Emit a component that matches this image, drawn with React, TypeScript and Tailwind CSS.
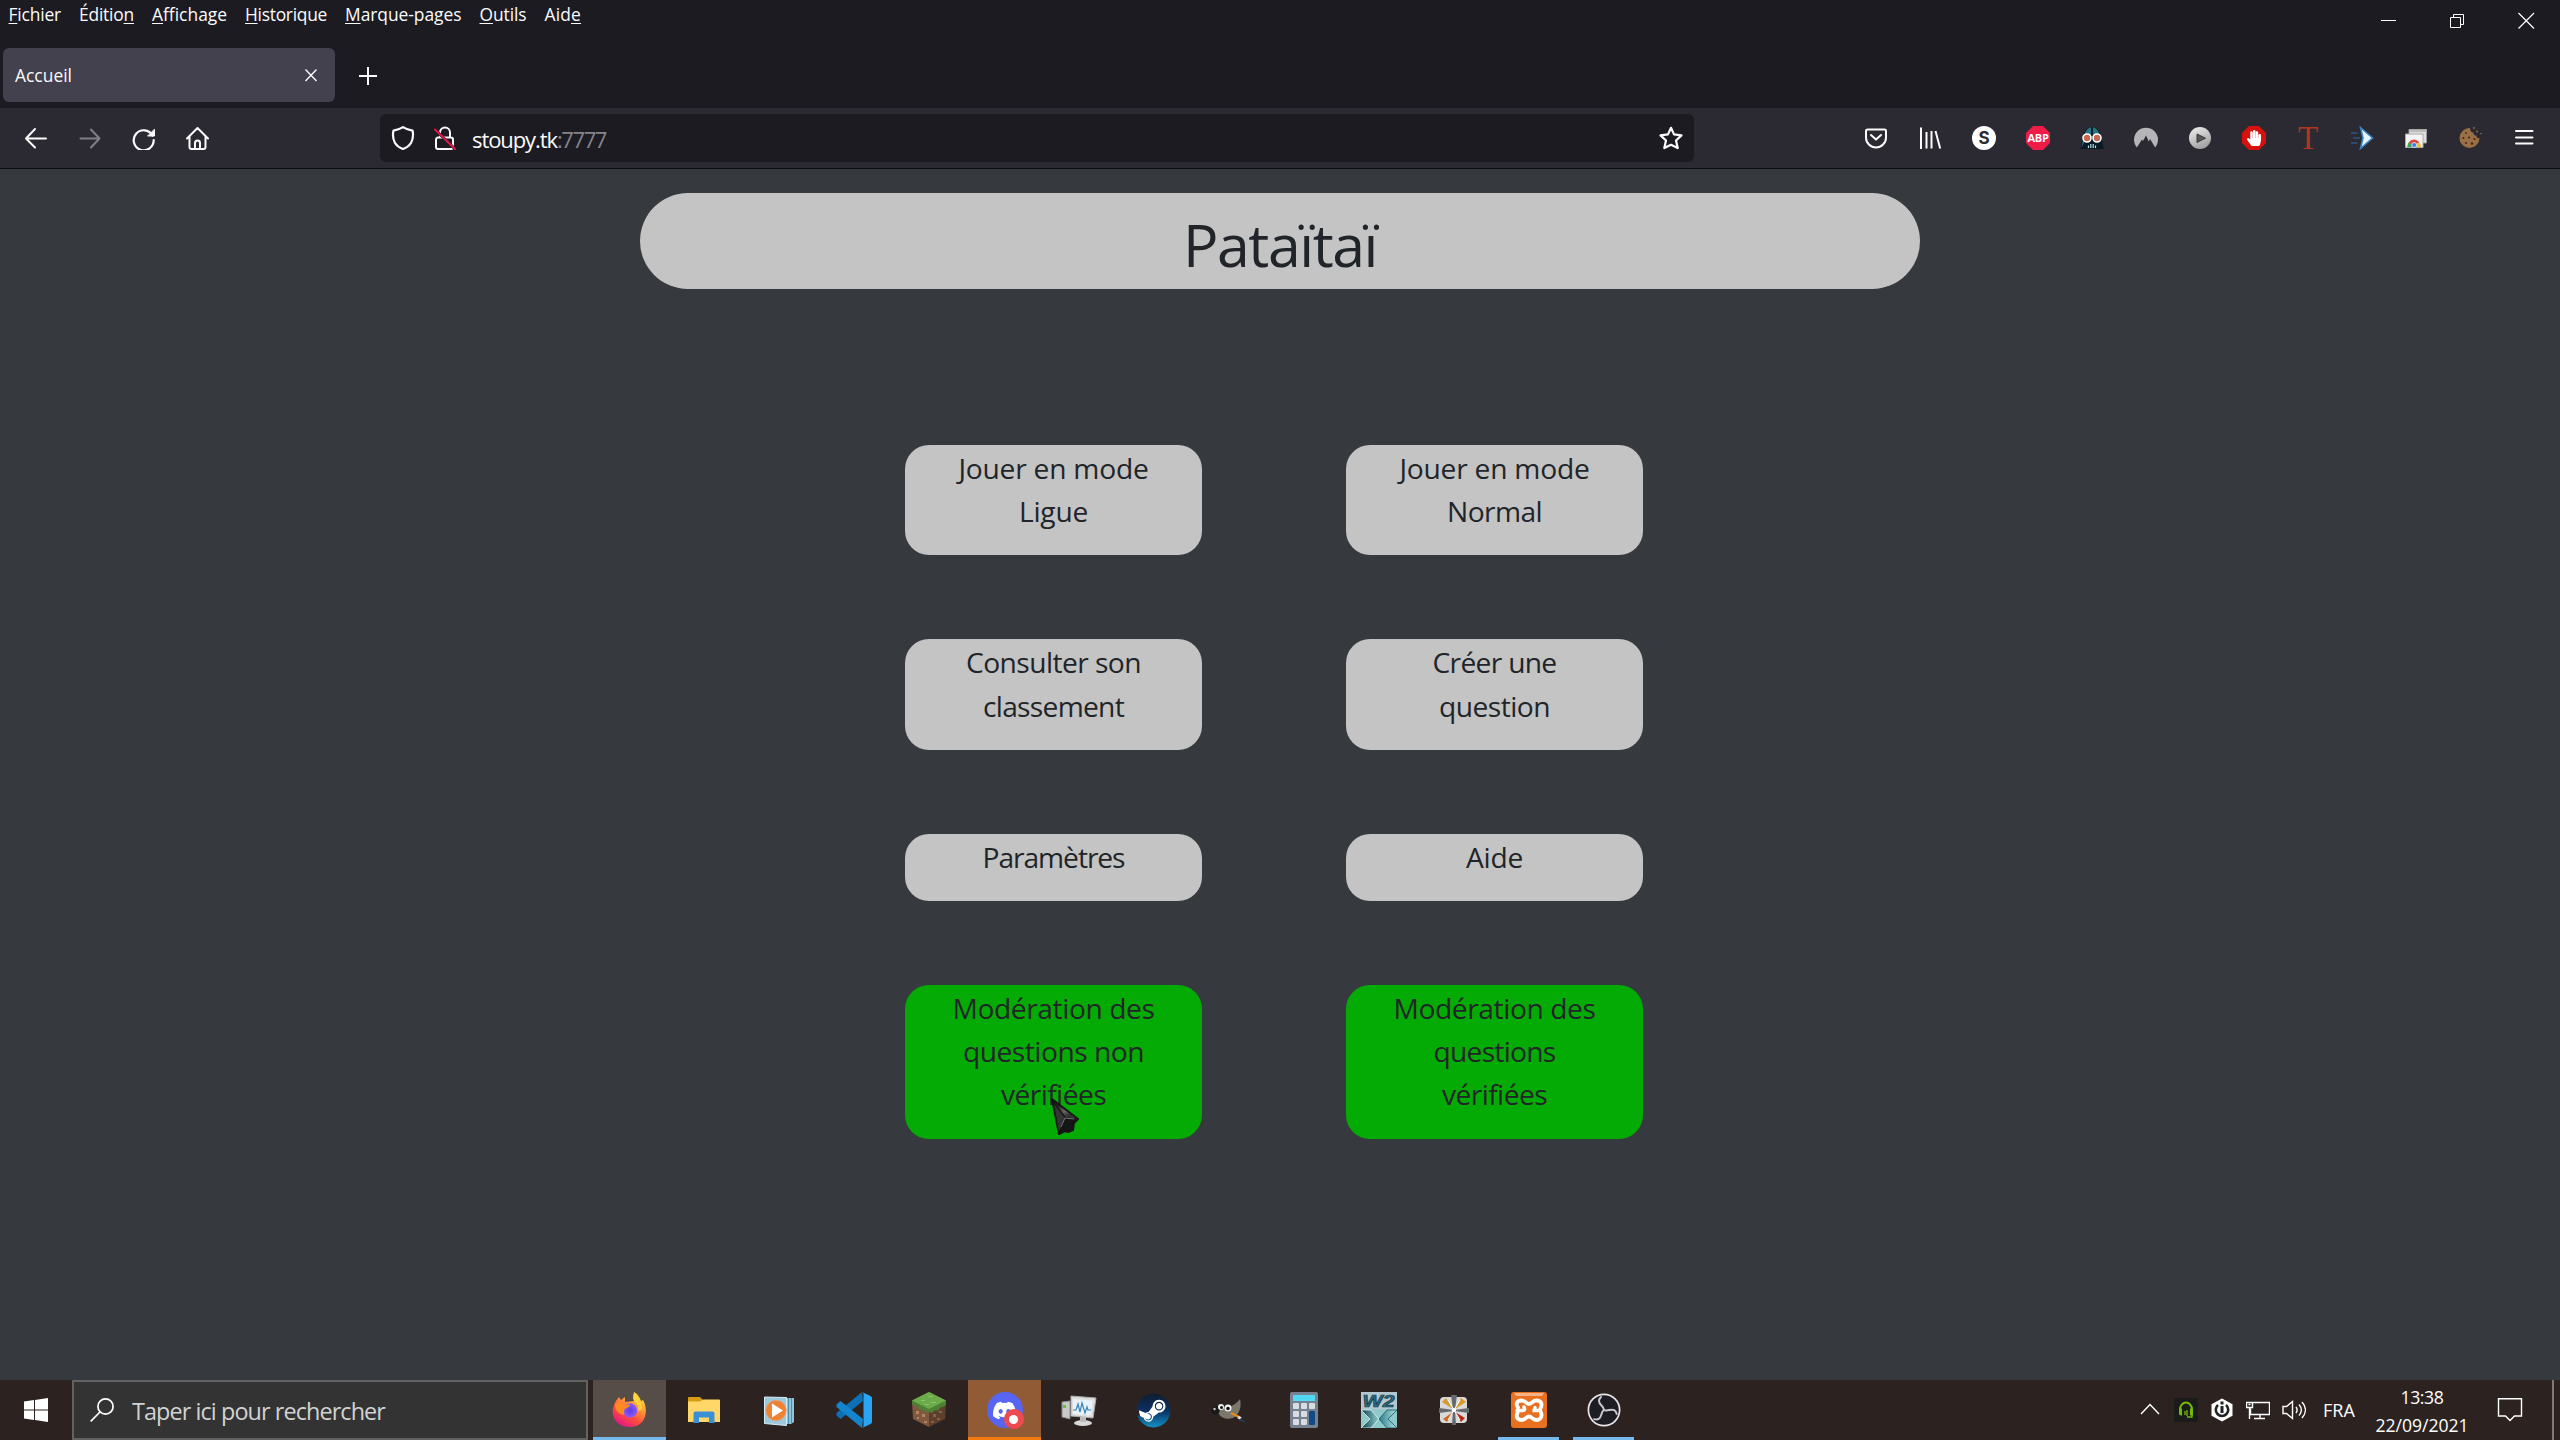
import { useLayoutEffect, useRef, type ReactNode } from 'react';
import { FaDiscord, FaSteam, FaHandPaper } from 'react-icons/fa';

/* Text whose tracking is adjusted so the run fills a given width. */
function Fit({ w, className = '', children }: { w: number; className?: string; children: ReactNode }) {
  const ref = useRef<HTMLSpanElement>(null);
  useLayoutEffect(() => {
    const el = ref.current;
    if (!el) return;
    el.style.letterSpacing = '0px';
    const n = (el.textContent || '').length;
    el.style.letterSpacing = `${(w - el.getBoundingClientRect().width) / n}px`;
  }, [w]);
  return (
    <span ref={ref} className={`inline-block whitespace-nowrap ${className}`}>
      {children}
    </span>
  );
}

const U = ({ children }: { children: ReactNode }) => (
  <span className="underline decoration-1 underline-offset-[2px] [text-decoration-skip-ink:none]">{children}</span>
);

function MenuBar() {
  return (
    <div className="flex h-[30px] gap-[18px] pl-[8.5px] text-[17.4px] leading-[29px] text-[#fbfbfe]">
      <Fit w={52.5}><U>F</U>ichier</Fit>
      <Fit w={55}>Éditio<U>n</U></Fit>
      <Fit w={75}><U>A</U>ffichage</Fit>
      <Fit w={82}><U>H</U>istorique</Fit>
      <Fit w={116.5}><U>M</U>arque-pages</Fit>
      <Fit w={47}><U>O</U>utils</Fit>
      <Fit w={36.5}>Aid<U>e</U></Fit>
    </div>
  );
}

function WindowButtons() {
  return (
    <div className="flex h-[42px] text-white">
      <svg width="69" height="42" fill="none" stroke="currentColor"><path d="M27 20.5h15" /></svg>
      <svg width="68" height="42" fill="none" stroke="currentColor"><path d="M27.5 17.5h10v10h-10zM30.500 17.500v-3h10v10h-3" /></svg>
      <svg width="69" height="42" fill="none" stroke="currentColor" strokeWidth="1.200"><path d="M27.500 13l15.500 15.500M43 13L27.500 28.500" /></svg>
    </div>
  );
}

const white = { fill: 'none', stroke: '#fbfbfe', strokeWidth: 2, strokeLinecap: 'round', strokeLinejoin: 'round' } as const;

function Extensions() {
  const icons: ReactNode[] = [
    <svg width="24" height="24" viewBox="0 0 24 24" {...white}><path d="M3.500 3.500h17a1.500 1.500 0 0 1 1.500 1.500v6.500a10 10 0 0 1-20 0V5a1.500 1.500 0 0 1 1.500-1.500zM7 9l5 4.600L17 9" /></svg>,
    <svg width="24" height="24" viewBox="0 0 24 24" {...white} strokeLinecap="butt"><path d="M3 1.500v21.500M8.500 6v16.500M13.500 5v17.500M17.500 5l4.700 17.500" /></svg>,
    <svg width="24" height="24" viewBox="0 0 24 24"><circle cx="12" cy="12" r="12" fill="#fff" /><text x="12" y="18" textAnchor="middle" fontSize="17" fontWeight="700" fontFamily="Inter, sans-serif" fill="#2b2a33">S</text></svg>,
    <span className="relative flex size-6 items-center justify-center"><svg className="absolute inset-0" width="24" height="24" viewBox="0 0 24 24"><path d="M7 0h10l7 7v10l-7 7H7l-7-7V7z" fill="#ee1c46" /></svg><span className="relative text-[11px] leading-6 font-bold tracking-[-0.3px] text-white">ABP</span></span>,
    <svg width="24" height="24" viewBox="0 0 24 24"><path d="M0 23C2 18 2 9 5 5c3-5 10-6 14 0 3 4 3 13 5 18z" fill="#0b1a24" /><path d="M5 7C8-1 16-1 19 7l1 4H4zM1 22C3 17 3 11 5 8l-1 9z" fill="#28747f" /><path d="M11 1h2v9h-2z" fill="#123" /><circle cx="7" cy="12" r="4" fill="#c86a50" stroke="#fff" strokeWidth="1.600" /><circle cx="17" cy="12" r="4" fill="#c86a50" stroke="#fff" strokeWidth="1.600" /><path d="M8.500 19.500V22M10.800 18v4M13.200 18v4M15.500 19.500V22" stroke="#aee0e8" strokeWidth="1.200" /></svg>,
    <svg width="24" height="24" viewBox="0 0 24 24"><path d="M2.800 21.500A12 12 0 1 1 21.200 21.500L16 13l-1.200 2.600L12 9.500l-3 5.500-1-1.500z" fill="#b5b5b9" /></svg>,
    <svg width="24" height="24" viewBox="0 0 24 24"><defs><linearGradient id="pl" x2="0.500" y2="1"><stop stopColor="#f2f2f2" /><stop offset="1" stopColor="#a2a2a2" /></linearGradient></defs><circle cx="12" cy="12" r="11" fill="url(#pl)" /><path d="M9 8l8.500 4.200L9 16.500z" fill="#555" stroke="#3a3a3a" /></svg>,
    <span className="relative flex size-6 items-center justify-center"><svg className="absolute inset-0" width="24" height="24" viewBox="0 0 24 24"><path d="M7 0h10l7 7v10l-7 7H7l-7-7V7z" fill="#d8100e" /></svg><FaHandPaper className="relative" size={16} color="#fff" /></span>,
    <span className="font-['Liberation_Serif',serif] text-[33px] leading-[40px] text-[#b03422]">T</span>,
    <svg width="24" height="24" viewBox="0 0 24 24"><path d="M10.500 1.500L22.500 12l-12 10.500 2.500-10.500z" fill="#e6f4ff" stroke="#3c83c4" strokeWidth="1.600" /><path d="M1 7h6.500M3 12h7M1 17h6.500" stroke="#2a5785" strokeWidth="1.600" /></svg>,
    <svg width="24" height="24" viewBox="0 0 24 24"><path d="M5 3.500h17.500v13.500H5z" fill="#ddd" stroke="#999" /><path d="M5 3.500h17.500V6H5z" fill="#bbb" /><path d="M1.500 8h17.500v13.500H1.500z" fill="#f3f3f3" stroke="#aaa" /><path d="M3.500 21a6.500 7.500 0 0 1 13 0z" fill="#e0453a" /><path d="M3.500 21c0-2 .5-3.500 1.500-5L9 21z" fill="#3aa757" /><path d="M12 21l1-4h3c.5 1.500.5 2.500.5 4z" fill="#fbc11a" /><circle cx="10.200" cy="19" r="2.500" fill="#3f7ff0" stroke="#fff" strokeWidth="0.700" /></svg>,
    <svg width="24" height="24" viewBox="0 0 24 24"><path d="M12 2a10 10 0 1 0 9.500 10c-2 .5-3-.5-3-2.200-2 0-3.500-1.500-3-3.300C13 6.500 12 4.500 12 2z" fill="#9b6f45" /><g fill="#3c2718"><circle cx="8" cy="7" r="0.900" /><circle cx="5.500" cy="12" r="1" /><circle cx="11" cy="11.500" r="1.100" /><circle cx="8" cy="17" r="1" /><circle cx="14" cy="17.500" r="1.200" /><circle cx="16.500" cy="13" r="1" /></g><g fill="#9b6f45"><circle cx="16" cy="2" r="0.900" /><circle cx="19" cy="5.500" r="1" /><circle cx="23" cy="7.500" r="0.800" /></g></svg>,
    <svg width="24" height="24" viewBox="0 0 24 24" {...white}><path d="M4 5h16.500M4 11.500h16.500M4 17.500h16.500" /></svg>,
  ];
  return (
    <div className="flex pr-[9px]">
      {icons.map((icon, i) => (
        <div key={i} className="flex w-[54px] items-center justify-center">{icon}</div>
      ))}
    </div>
  );
}

function Toolbar() {
  return (
    <div className="flex h-[61px] items-stretch border-b border-[#0c0c0e] bg-[#2b2a33]">
      <div className="flex w-[380px] items-center gap-[30px] pl-6">
        <svg width="24" height="24" viewBox="0 0 24 24" {...white}><path d="M2 12.500h20M11 3L2 12.500l9 9" /></svg>
        <svg width="24" height="24" viewBox="0 0 24 24" {...white} stroke="#7f7e85"><path d="M2.500 12.500h19M13 3.500l8.500 9-8.500 9" /></svg>
        <svg width="24" height="24" viewBox="0 0 24 24" {...white} strokeWidth="2.200"><path d="M20.500 9.500A10 10 0 1 0 21.700 14" /><path d="M22.500 3.500v6.500h-6.500z" fill="#fbfbfe" strokeWidth="1" /></svg>
        <svg width="24" height="24" viewBox="0 0 24 24" {...white}><path d="M1 12.500L11.500 2 22 12.500M3.500 10.500V21a2 2 0 0 0 2 2h12a2 2 0 0 0 2-2V10.500M9 22.500V17a2.500 2.500 0 0 1 5 0v5.500" /></svg>
      </div>
      <div className="my-1.5 flex w-[1314px] items-center rounded-md bg-[#1c1b22] pr-[11px] pl-[11px]">
        <svg width="24" height="24" viewBox="0 0 24 24" {...white} strokeWidth="2.200"><path d="M12 1.200C9 3.200 5.500 4.200 2.500 4.600 1.500 9 1.800 13 4 17c2 3.200 5 5 8 6 3-1 6-2.800 8-6 2.200-4 2.500-8 1.500-12.400C18.500 4.200 15 3.200 12 1.200z" /></svg>
        <svg className="ml-[18px]" width="24" height="24" viewBox="0 0 24 24" {...white}><path d="M7 11.500V6.500a5 5 0 0 1 10 0v5M5.500 11.500h12.500a2 2 0 0 1 2 2v7.500a2 2 0 0 1-2 2H5a2 2 0 0 1-2-2v-7.500a2 2 0 0 1 2-2z" /><path d="M2 3.500l20 19.500" stroke="#1c1b22" strokeWidth="3" /><path d="M2 3.500l20 19.500" stroke="#e2184a" strokeWidth="2" /></svg>
        <Fit w={85} className="ml-[15px] pt-0.5 text-[22px] leading-[44px] text-[#fbfbfe]">stoupy.tk</Fit>
        <Fit w={49} className="pt-0.5 text-[22px] leading-[44px] text-[#85848b]">:7777</Fit>
        <svg className="ml-auto" width="24" height="24" viewBox="0 0 24 24" {...white} strokeWidth="2.200"><path d="M12 1.800l3 6.600 7.500 1-5.500 5.100 1.700 7.600L12 18.800l-6.700 3.300L7 14.500 1.500 9.400l7.500-1z" /></svg>
      </div>
      <div className="ml-auto flex"><Extensions /></div>
    </div>
  );
}

function Browser() {
  return (
    <header className="bg-[#1c1b22]">
      <div className="flex h-12 justify-between">
        <MenuBar />
        <WindowButtons />
      </div>
      <div className="flex h-[60px] pl-[3px]">
        <div className="flex h-[54px] w-[332px] items-center justify-between rounded-md bg-[#42414d] pr-[18px] pl-3 text-[#fbfbfe]">
          <Fit w={57} className="text-[17.4px] leading-[54px]">Accueil</Fit>
          <svg width="12" height="54" fill="none" stroke="currentColor" strokeWidth="1.400"><path d="M0.500 21.500l11 11.500M11.500 21.500l-11 11.500" /></svg>
        </div>
        <svg className="ml-[23px]" width="20" height="54" fill="none" stroke="#fbfbfe" strokeWidth="2"><path d="M1 28h18M10 19v18" /></svg>
      </div>
      <Toolbar />
    </header>
  );
}

type Line = [string, number];
const cards: { lines: Line[]; green?: boolean }[] = [
  { lines: [['Jouer en mode', 190], ['Ligue', 69]] },
  { lines: [['Jouer en mode', 190], ['Normal', 95]] },
  { lines: [['Consulter son', 175], ['classement', 141]] },
  { lines: [['Créer une', 124], ['question', 111]] },
  { lines: [['Paramètres', 142]] },
  { lines: [['Aide', 57]] },
  { lines: [['Modération des', 202], ['questions non', 181], ['vérifiées', 105]], green: true },
  { lines: [['Modération des', 202], ['questions', 122], ['vérifiées', 105]], green: true },
];

function Cursor() {
  return (
    <svg className="absolute top-[112px] left-[144px]" width="36" height="44" viewBox="0 0 36 44">
      <defs><linearGradient id="cu" x2="1" y2="1"><stop offset="0.200" stopColor="#222" /><stop offset="0.500" stopColor="#666" /><stop offset="0.700" stopColor="#333" /></linearGradient></defs>
      <path d="M3 2l26 20-4 4-1 7-5 2-3-1-6 3z" fill="#151515" stroke="#151515" strokeWidth="2" strokeLinejoin="round" />
      <path d="M5 5l23 17-11-2z" fill="url(#cu)" />
      <path d="M16 21L10 34 5 7z" fill="#343434" />
      <path d="M16 21l9 1M16 21l-4 9" stroke="#888" strokeWidth="0.800" />
    </svg>
  );
}

function Page() {
  return (
    <main className="flex flex-1 flex-col items-center bg-[#36393e] pt-6 text-[#212529]">
      <h1 className="flex h-24 w-[1280px] justify-center rounded-[48px] bg-[#c4c4c4]">
        <Fit w={194} className="text-[59px] leading-[102px]">Pataïtaï</Fit>
      </h1>
      <div className="mt-[156px] mr-3 grid grid-cols-[297px_297px] gap-x-36 gap-y-[84px]">
        {cards.map((card, i) => (
          <div key={i} className={`relative flex flex-col items-center rounded-[24px] pt-0.5 pb-[22px] ${card.green ? 'bg-[#04ab04]' : 'bg-[#c4c4c4]'}`}>
            {card.lines.map(([text, w]) => (
              <Fit key={text} w={w} className="text-[28.2px] leading-[43.2px]">{text}</Fit>
            ))}
            {i === 6 && <Cursor />}
          </div>
        ))}
      </div>
    </main>
  );
}

const apps: { icon: ReactNode; tile?: string; bar?: string }[] = [
  {
    tile: 'bg-[#564c48]', bar: 'w-[73px] bg-[#76b9ed]',
    icon: (
      <svg width="36" height="36" viewBox="0 0 36 36">
        <defs>
          <linearGradient id="ff" x1="0.900" y1="0" x2="0.300" y2="1"><stop stopColor="#fff44f" /><stop offset="0.350" stopColor="#ffa436" /><stop offset="0.700" stopColor="#ff4a3f" /><stop offset="1" stopColor="#e31587" /></linearGradient>
          <radialGradient id="fp"><stop stopColor="#5b3de0" /><stop offset="1" stopColor="#9059ff" /></radialGradient>
        </defs>
        <path d="M4 9l3-4 2 3 4-3v5l9-1-1-3 1-6c4 2 6 6 7 9l2-1c6 10 3 27-13 27C1 35-3 20 4 9z" fill="url(#ff)" />
        <circle cx="18" cy="18.500" r="7.200" fill="url(#fp)" />
        <path d="M3 13c2-3 5-3 8-1 2 1 4 0 7 1-1 3-4 3-5 4-2 2 0 4-1 6-6-1-9-5-9-10z" fill="#ff8a22" />
        <path d="M23 10c3 2 4 6 3 9l4-1c0-7-3-12-8-17-1 4-1 6 1 9z" fill="#ffd93b" opacity="0.800" />
      </svg>
    ),
  },
  { icon: <svg width="36" height="36" viewBox="0 0 36 36"><path d="M2 6a1 1 0 0 1 1-1h11l3 3h16v4H2z" fill="#d89c14" /><path d="M2 9.500h12l3-2h16a1 1 0 0 1 1 1V30H2z" fill="#ffd769" /><path d="M7.500 31V21.500a2 2 0 0 1 2-2h17a2 2 0 0 1 2 2V31h-5.500v-5.500H13V31z" fill="#3b8fd6" /></svg> },
  { icon: <svg width="36" height="36" viewBox="0 0 36 36"><path d="M12 6h21v24l-3 2H12z" fill="#8fc3dc" /><path d="M27.500 6v26M30.500 6v25" stroke="#4e8fb0" /><path d="M3.500 5l22 .5v28l-22-2z" fill="#9dc9dd" stroke="#d5edf7" /><circle cx="15" cy="18.500" r="10.300" fill="#f08332" stroke="#d4aa91" strokeWidth="1" /><path d="M11 11.500l11 7-11 7z" fill="#fff" /></svg> },
  { icon: <svg width="36" height="36" viewBox="0 0 36 36"><path d="M26 0l1 9L4.500 27 .5 23.500v-2.500z" fill="#0d70b5" /><path d="M.5 12.500L4.500 9 27 27l-1 9L.5 15z" fill="#1484cc" /><path d="M26 0l8.500 4a2.500 2.500 0 0 1 1.500 2v24a2.500 2.500 0 0 1-1.500 2L26 36c1-.5 1.500-1.500 1.500-2.500v-31C27.500 1.500 27 .5 26 0z" fill="#2aa5f3" /></svg> },
  {
    icon: (
      <svg width="36" height="36" viewBox="0 0 36 36">
        <path d="M1 9l17 8v18L2 27z" fill="#80583e" /><path d="M35 9l-17 8v18l16-8z" fill="#5c3f2c" />
        <path d="M18 0l17 8.500V13l-3 2-2 0-3 4-3-1-3 3-3-1-3 0-3-2-3 0-3-4-3 0-2-2V8.500z" fill="#4c8035" /><path d="M18 0l17 8.500L18 17 1 8.500z" fill="#6bab4a" />
        <path d="M5 19h3v3H5zM11 22h3v3h-3zM6 25h2v2H6zM13 29h3v2h-3z" fill="#b08563" /><path d="M22 22h3v3h-3zM28 19h3v2h-3zM26 26h3v2h-3zM20 29h3v2h-3z" fill="#8a6145" />
        <path d="M10 8h4v1h-4zM17 4h5v1h-5zM20 10h5v1h-5zM14 12h4v1h-4z" fill="#89c765" />
      </svg>
    ),
  },
  {
    tile: 'bg-[#915c35]', bar: 'w-[73px] bg-[#f5790f]',
    icon: (
      <span className="relative flex size-9 items-center justify-center rounded-full bg-[#5865f2]">
        <FaDiscord size={25} color="#fff" />
        <span className="absolute top-[17px] left-[17px] flex size-5 items-center justify-center rounded-full bg-[#ed4b4f]"><span className="size-[9px] rounded-full bg-white" /></span>
      </span>
    ),
  },
  { icon: <svg width="36" height="36" viewBox="0 0 36 36"><path d="M1 10l8-1v18l-8-2z" fill="#c9c9c9" stroke="#888" /><path d="M2 13h3v3H2z" fill="#5cc43c" /><path d="M10 4l25 2-3 20-22-2z" fill="#ddd" stroke="#aaa" /><path d="M12 7l20 1.500-2.500 15L12 22z" fill="#e9f2f8" /><path d="M12 18h3l2-6 2 8 2-9 3 10 2-6 1 3h3" fill="none" stroke="#3b84b8" strokeWidth="1.200" /><ellipse cx="22" cy="31" rx="9" ry="3" fill="#d8d8d8" /><path d="M19 25h6v5h-6z" fill="#bbb" /></svg> },
  {
    icon: (
      <span className="relative flex size-9 items-center justify-center">
        <span className="absolute size-[30px] rounded-full bg-white" />
        <svg className="absolute" width="1" height="1"><defs><linearGradient id="st" x2="0" y2="1"><stop stopColor="#111d2e" /><stop offset="0.500" stopColor="#0b2f63" /><stop offset="1" stopColor="#1490c4" /></linearGradient></defs></svg>
        <FaSteam className="relative" size={35} fill="url(#st)" />
      </span>
    ),
  },
  { icon: <svg width="36" height="36" viewBox="0 0 36 36"><path d="M29 7c2 8-1 16-7 19-6 2-12 0-14-4l-3-1c1-4 4-5 7-6 8 1 13-3 17-8z" fill="#7c776b" /><circle cx="4.500" cy="18.500" r="4.200" fill="#181818" /><circle cx="3.500" cy="17" r="1.200" fill="#ccc" /><circle cx="10" cy="15" r="3" fill="#f2f2f2" /><circle cx="17" cy="16" r="3.500" fill="#f2f2f2" /><circle cx="10.500" cy="15.500" r="1.500" fill="#111" /><circle cx="17" cy="16.500" r="1.800" fill="#111" /><path d="M20 21l8 4" stroke="#e98a17" strokeWidth="2.500" /><path d="M27 25l3 1.500" stroke="#ddd" strokeWidth="3" /><path d="M30 26l6 5-8-2z" fill="#26364a" /></svg> },
  { icon: <svg width="36" height="36" viewBox="0 0 36 36"><rect x="4" y="0" width="28" height="36" rx="2" fill="#76828f" /><path d="M7 3h22v6H7z" fill="#50d7f4" /><g fill="#d9dde2"><rect x="7" y="11" width="6" height="6" rx="1" /><rect x="15" y="11" width="6" height="6" rx="1" /><rect x="23" y="11" width="6" height="6" rx="1" /><rect x="7" y="19" width="6" height="6" rx="1" /><rect x="15" y="19" width="6" height="6" rx="1" /><rect x="7" y="27" width="6" height="6" rx="1" /><rect x="15" y="27" width="6" height="6" rx="1" /></g><rect x="23" y="19" width="6" height="14" rx="1" fill="#134a86" /></svg> },
  {
    icon: (
      <svg width="36" height="36" viewBox="0 0 36 36">
        <defs>
          <linearGradient id="wl" x2="1"><stop stopColor="#0f3a4c" /><stop offset="1" stopColor="#8fd0d0" /></linearGradient>
          <linearGradient id="wr" x2="1"><stop stopColor="#2c7d8e" /><stop offset="1" stopColor="#b5e5e2" /></linearGradient>
        </defs>
        <path d="M0 0h36v36H0z" fill="#8fc9ca" /><path d="M0 0h36v17H0z" fill="#b4c6ce" />
        <text x="1.500" y="14.500" textLength="32" lengthAdjust="spacingAndGlyphs" fontSize="16" fontWeight="700" fontStyle="italic" fontFamily="Liberation Sans, sans-serif" fill="#2a6f86" stroke="#173b48" strokeWidth="0.700">W2</text>
        <path d="M0 18h10l8 9-8 9H0l9-9z" fill="url(#wl)" stroke="#dff3f3" strokeWidth="0.800" />
        <path d="M36 18H26l-8 9 8 9h10l-9-9z" fill="url(#wr)" stroke="#1d5564" strokeWidth="0.800" />
      </svg>
    ),
  },
  {
    icon: (
      <svg width="36" height="36" viewBox="0 0 36 36">
        <rect x="4" y="5" width="27" height="26" rx="4" fill="#d9d9d9" /><path d="M15 3h6l-2 15 1 15h-4l1-15zM3 16l15 2 15-2v5l-15-2-15 2z" fill="#65696e" />
        <path d="M17 17L6 10l4-4zM19 17l6-11 5 4z" fill="#d99a2b" /><path d="M17 20L7 27l4 3z" fill="#d1661c" /><path d="M19 20l6 10 4-4z" fill="#b52a16" /><path d="M12 8l12 20M24 8L12 28" stroke="#fff" strokeWidth="1" /><circle cx="18" cy="18" r="2.200" fill="#fff" />
      </svg>
    ),
  },
  {
    bar: 'w-[61px] bg-[#76b9ed]',
    icon: (
      <svg width="36" height="36" viewBox="0 0 36 36">
        <rect width="36" height="36" rx="3" fill="#e9701f" /><path d="M3 1h30l-2 3H5z" fill="#f6b184" />
        <path d="M7 15.500C4 11.500 6.500 8.500 10.500 8.500c4 0 4.500 3.500 7.500 3.500s3.500-3.500 7.500-3.500 6 3 4.500 6.500c-.5 1.500-1 2-1 3s.5 1.500 1 3c1.500 3.500-.5 7-4.500 7s-4.500-3.500-7.500-3.500-3.500 3.500-7.500 3.500-6-3.500-4-7" fill="none" stroke="#fff" strokeWidth="3.800" strokeLinecap="round" />
        <path d="M6 18.500h6c2 0 2-2 1-3.500M24 15.500v2c0 1-1.500 1-2.500 1h5" fill="none" stroke="#fff" strokeWidth="3.400" strokeLinecap="round" />
      </svg>
    ),
  },
  {
    bar: 'w-[61px] bg-[#76b9ed]',
    icon: (
      <svg width="36" height="36" viewBox="0 0 36 36">
        <circle cx="18" cy="18" r="15.600" fill="#1f1d24" stroke="#e8e6e9" strokeWidth="1.700" />
        <g fill="none" stroke="#c9c7cb" strokeWidth="2" strokeLinecap="round"><path d="M18 18c0-4-5-5-5-9 0-2 1-3 2-4" /><path d="M18 18c0-4-5-5-5-9 0-2 1-3 2-4" transform="rotate(120 18 18)" /><path d="M18 18c0-4-5-5-5-9 0-2 1-3 2-4" transform="rotate(240 18 18)" /></g>
      </svg>
    ),
  },
];

function Tray() {
  const line = { fill: 'none', stroke: '#fff', strokeWidth: 1.4 } as const;
  return (
    <div className="ml-auto flex items-center text-white">
      <svg width="24" height="24" viewBox="0 0 24 24" {...line}><path d="M3 16l9-9.500 9 9.500" /></svg>
      <svg className="ml-3" width="24" height="24" viewBox="0 0 24 24"><path d="M0 0h24v24H0z" fill="#1a1b1b" /><path d="M6 11.500a6 7 0 0 1 12 0" fill="none" stroke="#76b900" strokeWidth="2" /><path d="M5 10.500h3v7H7a2 2 0 0 1-2-2zM16 10.500h3v7h-3z" fill="#76b900" /><path d="M18 17v2h-5M11 13v4M13 12v6" fill="none" stroke="#76b900" strokeWidth="1.300" /></svg>
      <svg className="ml-3" width="24" height="24" viewBox="0 0 24 24"><path d="M12 0.500l10.500 5.800v11.500L12 23.500 1.500 17.800V6.300z" fill="#fff" /><path d="M8 7a6.200 6.200 0 1 0 8 0" fill="none" stroke="#222" strokeWidth="2.600" /><path d="M12 3.500v3M12 8v7" stroke="#222" strokeWidth="3" /></svg>
      <svg className="ml-3" width="24" height="24" viewBox="0 0 24 24" {...line}><path d="M7 4.500h16.500v12H4.500v-6M0.500 4.500h6v5h-6zM3.500 9.500v11.500M8 20.500h11M14 16.500v4M2.500 6.500h2" /></svg>
      <svg className="ml-3" width="24" height="24" viewBox="0 0 24 24" {...line}><path d="M1 8.500h3.500l6-5v17l-6-5H1zM14 9c1.500 2 1.500 4 0 6M17 6.500c3 3.500 3 7.500 0 11M20 4c4.500 5 4.500 11 0 16" /></svg>
      <Fit w={32} className="ml-[17px] text-[18px] leading-[60px]">FRA</Fit>
      <div className="ml-5 flex w-[94px] flex-col items-center pt-px text-[17.6px] leading-[28px]">
        <Fit w={43}>13:38</Fit>
        <Fit w={93}>22/09/2021</Fit>
      </div>
      <svg className="ml-[28px]" width="26" height="24" viewBox="0 0 26 24" {...line}><path d="M1.500 0.700h23v17.300h-7l-4.500 4.500L8.500 18h-7z" /></svg>
      <div className="ml-[29px] h-[60px] w-2 border-l-2 border-[#80797a]" />
    </div>
  );
}

function Taskbar() {
  return (
    <footer className="flex h-[60px] bg-[#2c2321]">
      <div className="flex w-[72px] items-center justify-center">
        <svg width="24" height="24" viewBox="0 0 24 24" fill="#fff"><path d="M0 3.500l10-1.400v9.400H0zM11 2l13-2v11.500H11zM0 12.500h10v9.400L0 20.500zM11 12.500h13V24l-13-2z" /></svg>
      </div>
      <div className="flex w-[516px] items-center border-2 border-[#626262] bg-[#333333] pl-4">
        <svg width="24" height="24" viewBox="0 0 24 24" fill="none" stroke="#fff" strokeWidth="1.700"><circle cx="15.500" cy="8.500" r="7.600" /><path d="M10 14L.7 23.300" /></svg>
        <Fit w={253} className="ml-[18px] pt-0.5 text-[23.400px] leading-[54px] text-[#d2d2d2]">Taper ici pour rechercher</Fit>
      </div>
      <div className="ml-1 flex">
        {apps.map((a, i) => (
          <div key={i} className={`flex w-[75px] justify-center ${a.tile ? '' : 'pr-0.5'}`}>
            <div className={`relative flex w-[73px] items-center justify-center ${a.tile ?? ''}`}>
              {a.icon}
              {a.bar && <span className={`absolute bottom-0 h-[3px] ${a.bar}`} />}
            </div>
          </div>
        ))}
      </div>
      <Tray />
    </footer>
  );
}

export default function App() {
  return (
    <div className="flex h-[1440px] w-[2560px] flex-col overflow-hidden font-['Open_Sans','Noto_Sans',sans-serif]">
      <Browser />
      <Page />
      <Taskbar />
    </div>
  );
}
